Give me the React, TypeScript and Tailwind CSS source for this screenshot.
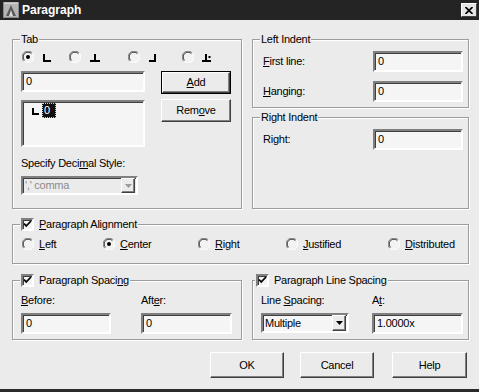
import React from 'react';

const U = ({ children }: { children: React.ReactNode }) => (
  <span className="underline underline-offset-[1px]">{children}</span>
);

const Radio = ({ checked = false }: { checked?: boolean }) => (
  <svg width="12" height="12" viewBox="0 0 12 12" className="shrink-0">
    <circle cx="6" cy="6" r="5.5" fill="#f3f3f3" />
    <path d="M10.2 1.8 A5.9 5.9 0 0 0 1.8 10.2" stroke="#7c7c7c" fill="none" />
    <path d="M9.4 2.6 A4.8 4.8 0 0 0 2.6 9.4" stroke="#3a3a3a" fill="none" />
    <path d="M1.8 10.2 A5.9 5.9 0 0 0 10.2 1.8" stroke="#ffffff" fill="none" />
    {checked && <circle cx="6" cy="6" r="2" fill="#000" />}
  </svg>
);

const Check = () => (
  <div className="w-[13px] h-[13px] shrink-0 border-2 border-t-[#808080] border-l-[#808080] border-b-white border-r-white bg-[#f4f4f4] shadow-[inset_1px_1px_0_#404040] flex items-center justify-center">
    <svg width="9" height="9" viewBox="0 0 9 9">
      <path d="M1 3.5 L3.2 6 L8 1" stroke="#000" strokeWidth="1.8" fill="none" />
    </svg>
  </div>
);

const Field = ({ value, className = '' }: { value: string; className?: string }) => (
  <div
    className={`h-[21px] border-2 border-t-[#808080] border-l-[#808080] border-b-white border-r-white bg-[#f5f5f5] shadow-[inset_1px_1px_0_#404040] pl-[3px] flex items-center ${className}`}
  >
    {value}
  </div>
);

const Btn = ({ children, className = '' }: { children: React.ReactNode; className?: string }) => (
  <div
    className={`flex items-center justify-center bg-[#ebebeb] border border-t-white border-l-white border-b-[#404040] border-r-[#404040] shadow-[inset_-1px_-1px_0_#808080] ${className}`}
  >
    {children}
  </div>
);

const Group = ({
  label,
  className = '',
  labelClass = 'left-[7px]',
  children,
}: {
  label: React.ReactNode;
  className?: string;
  labelClass?: string;
  children?: React.ReactNode;
}) => (
  <div className={`relative border border-[#9c9c9c] shadow-[inset_1px_1px_0_#fff,1px_1px_0_#fff] ${className}`}>
    <div className={`absolute top-[-8px] h-[14px] px-[1px] bg-[#ebebeb] flex items-center gap-[5px] ${labelClass}`}>
      {label}
    </div>
    {children}
  </div>
);

const TabIcon = ({ kind }: { kind: 'left' | 'center' | 'right' | 'decimal' }) => {
  const paths: Record<string, React.ReactNode> = {
    left: <path d="M1 3 V10 H8" stroke="#000" strokeWidth="2" fill="none" />,
    center: <path d="M5 3 V10 M0 10 H10" stroke="#000" strokeWidth="2" fill="none" />,
    right: <path d="M6 3 V10 H0" stroke="#000" strokeWidth="2" fill="none" />,
    decimal: (
      <>
        <path d="M4 3 V10 M0 10 H9" stroke="#000" strokeWidth="2" fill="none" />
        <rect x="6.5" y="5" width="2" height="2" fill="#000" />
      </>
    ),
  };
  return (
    <svg width="11" height="12" viewBox="0 0 11 12" className="shrink-0">
      {paths[kind]}
    </svg>
  );
};

const Arrow = ({ color }: { color: string }) => (
  <svg width="7" height="4" viewBox="0 0 7 4">
    <path d="M0 0 H7 L3.5 4 Z" fill={color} />
  </svg>
);

export default function App() {
  return (
    <div className="w-[479px] h-[392px] bg-[#ebebeb] flex flex-col overflow-hidden text-[11px] leading-[13px] tracking-[-0.25px] text-black font-['Liberation_Sans',Arial,sans-serif] border-b-[3px] border-[#2a2a2a]">
      {/* title bar */}
      <div className="h-[20px] shrink-0 bg-[#242424] flex items-center pl-[3px] pr-[2px]">
        <svg width="16" height="16" viewBox="0 0 16 16">
          <rect x="0" y="0" width="16" height="16" fill="#8a8a8a" />
          <rect x="1" y="1" width="14" height="14" fill="#b5b5b5" />
          <path d="M3 14 L8 3 L13 14 Z" fill="#5a5a5a" />
          <path d="M6 14 L8 8 L10 14 Z" fill="#d8d8d8" />
          <path d="M1 1 H15" stroke="#eeeeee" />
        </svg>
        <span className="ml-[3px] text-white font-bold text-[12px] leading-[14px] tracking-normal">Paragraph</span>
        <div className="ml-auto w-[16px] h-[14px] bg-[#e4e4e4] border border-t-white border-l-white border-b-[#404040] border-r-[#404040] flex items-center justify-center">
          <svg width="8" height="7" viewBox="0 0 8 7">
            <path d="M0.5 0 L7.5 7 M7.5 0 L0.5 7" stroke="#000" strokeWidth="1.6" />
          </svg>
        </div>
      </div>

      <div className="flex-1 pl-[12px] pr-[10px] pt-[19px]">
        {/* top row */}
        <div className="flex gap-[10px]">
          <Group label="Tab" className="w-[230px] h-[170px]">
            <div className="pl-[8px] pt-[11px]">
              <div className="flex items-center h-[12px] ml-[1px]">
                <div className="w-[47px] flex items-center">
                  <Radio checked />
                  <div className="ml-[9px]">
                    <TabIcon kind="left" />
                  </div>
                </div>
                <div className="w-[59px] flex items-center">
                  <Radio />
                  <div className="ml-[9px]">
                    <TabIcon kind="center" />
                  </div>
                </div>
                <div className="w-[54px] flex items-center">
                  <Radio />
                  <div className="ml-[9px]">
                    <TabIcon kind="right" />
                  </div>
                </div>
                <div className="flex items-center">
                  <Radio />
                  <div className="ml-[8px]">
                    <TabIcon kind="decimal" />
                  </div>
                </div>
              </div>

              <div className="flex mt-[8px] gap-[16px]">
                <div className="w-[124px]">
                  <Field value="0" />
                  <div className="mt-[8px] h-[47px] border-2 border-t-[#808080] border-l-[#808080] border-b-white border-r-white bg-[#f5f5f5] shadow-[inset_1px_1px_0_#404040] flex items-start">
                    <svg width="7" height="7" viewBox="0 0 7 7" className="ml-[9px] mt-[6px]">
                      <path d="M1 0 V6 H7" stroke="#000" strokeWidth="2" fill="none" />
                    </svg>
                    <div className="ml-[3px] mt-[1px] w-[14px] h-[15px] bg-[#111] text-white border border-dotted border-[#cfcfcf] flex items-center pl-[1px]">
                      0
                    </div>
                  </div>
                </div>
                <div className="w-[70px]">
                  <div className="h-[23px] border border-black">
                    <Btn className="h-full">
                      <U>A</U>dd
                    </Btn>
                  </div>
                  <Btn className="mt-[5px] h-[23px]">
                    Rem<U>o</U>ve
                  </Btn>
                </div>
              </div>

              <div className="mt-[10px] h-[13px]">
                Specify Deci<U>m</U>al Style:
              </div>
              <div className="mt-[6px] w-[117px] h-[19px] border-2 border-t-[#808080] border-l-[#808080] border-b-white border-r-white bg-[#ebebeb] shadow-[inset_1px_1px_0_#404040] flex items-center pl-[2px] pr-[1px]">
                <span className="text-[#8c8c8c]">',' comma</span>
                <Btn className="ml-auto w-[14px] h-[15px]">
                  <Arrow color="#9a9a9a" />
                </Btn>
              </div>
            </div>
          </Group>

          <div className="w-[217px] flex flex-col gap-[9px]">
            <Group label="Left Indent" className="h-[69px]">
              <div className="pt-[11px] pl-[10px]">
                <div className="flex items-center h-[21px]">
                  <div className="w-[110px]">
                    <U>F</U>irst line:
                  </div>
                  <Field value="0" className="w-[90px]" />
                </div>
                <div className="flex items-center h-[21px] mt-[9px]">
                  <div className="w-[110px]">
                    <U>H</U>anging:
                  </div>
                  <Field value="0" className="w-[90px]" />
                </div>
              </div>
            </Group>
            <Group label="Right Indent" className="h-[92px]">
              <div className="pt-[11px] pl-[10px]">
                <div className="flex items-center h-[21px]">
                  <div className="w-[110px]">
                    Ri<U>g</U>ht:
                  </div>
                  <Field value="0" className="w-[90px]" />
                </div>
              </div>
            </Group>
          </div>
        </div>

        {/* alignment */}
        <Group
          className="mt-[15px] h-[40px]"
          label={
            <>
              <Check />
              <span>
                <U>P</U>aragraph Alignment
              </span>
            </>
          }
        >
          <div className="pt-[12px] pl-[9px] flex items-center h-[26px]">
            <div className="w-[81px] flex items-center gap-[5px]">
              <Radio />
              <span>
                <U>L</U>eft
              </span>
            </div>
            <div className="w-[95px] flex items-center gap-[5px]">
              <Radio checked />
              <span>
                <U>C</U>enter
              </span>
            </div>
            <div className="w-[88px] flex items-center gap-[5px]">
              <Radio />
              <span>
                <U>R</U>ight
              </span>
            </div>
            <div className="w-[102px] flex items-center gap-[5px]">
              <Radio />
              <span>
                <U>J</U>ustified
              </span>
            </div>
            <div className="flex items-center gap-[5px]">
              <Radio />
              <span>
                <U>D</U>istributed
              </span>
            </div>
          </div>
        </Group>

        {/* spacing */}
        <div className="mt-[16px] flex gap-[10px]">
          <Group
            className="w-[230px] h-[60px]"
            label={
              <>
                <Check />
                <span>
                  Paragraph Spaci<U>n</U>g
                </span>
              </>
            }
          >
            <div className="pt-[13px] pl-[8px] flex">
              <div className="w-[120px]">
                <div className="h-[13px]">
                  <U>B</U>efore:
                </div>
                <Field value="0" className="mt-[6px] w-[90px]" />
              </div>
              <div>
                <div className="h-[13px]">
                  Aft<U>e</U>r:
                </div>
                <Field value="0" className="mt-[6px] w-[91px]" />
              </div>
            </div>
          </Group>
          <Group
            className="w-[217px] h-[60px]"
            labelClass="left-[2px] gap-[3px]"
            label={
              <>
                <Check />
                <span>
                  Para<U>g</U>raph Line Spacing
                </span>
              </>
            }
          >
            <div className="pt-[13px] pl-[8px] flex">
              <div className="w-[111px]">
                <div className="h-[13px]">
                  Line <U>S</U>pacing:
                </div>
                <div className="mt-[6px] w-[88px] h-[20px] border-2 border-t-[#808080] border-l-[#808080] border-b-white border-r-white bg-[#f5f5f5] shadow-[inset_1px_1px_0_#404040] flex items-center pl-[2px] pr-[1px]">
                  <span>Multiple</span>
                  <Btn className="ml-auto w-[14px] h-[16px]">
                    <Arrow color="#000" />
                  </Btn>
                </div>
              </div>
              <div>
                <div className="h-[13px]">
                  A<U>t</U>:
                </div>
                <Field value="1.0000x" className="mt-[6px] w-[91px]" />
              </div>
            </div>
          </Group>
        </div>

        {/* buttons */}
        <div className="mt-[12px] flex justify-end mr-[2px]">
          <Btn className="w-[74px] h-[26px]">OK</Btn>
          <Btn className="ml-[16px] w-[74px] h-[26px]">Cancel</Btn>
          <Btn className="ml-[18px] w-[75px] h-[26px]">Help</Btn>
        </div>
      </div>
    </div>
  );
}
